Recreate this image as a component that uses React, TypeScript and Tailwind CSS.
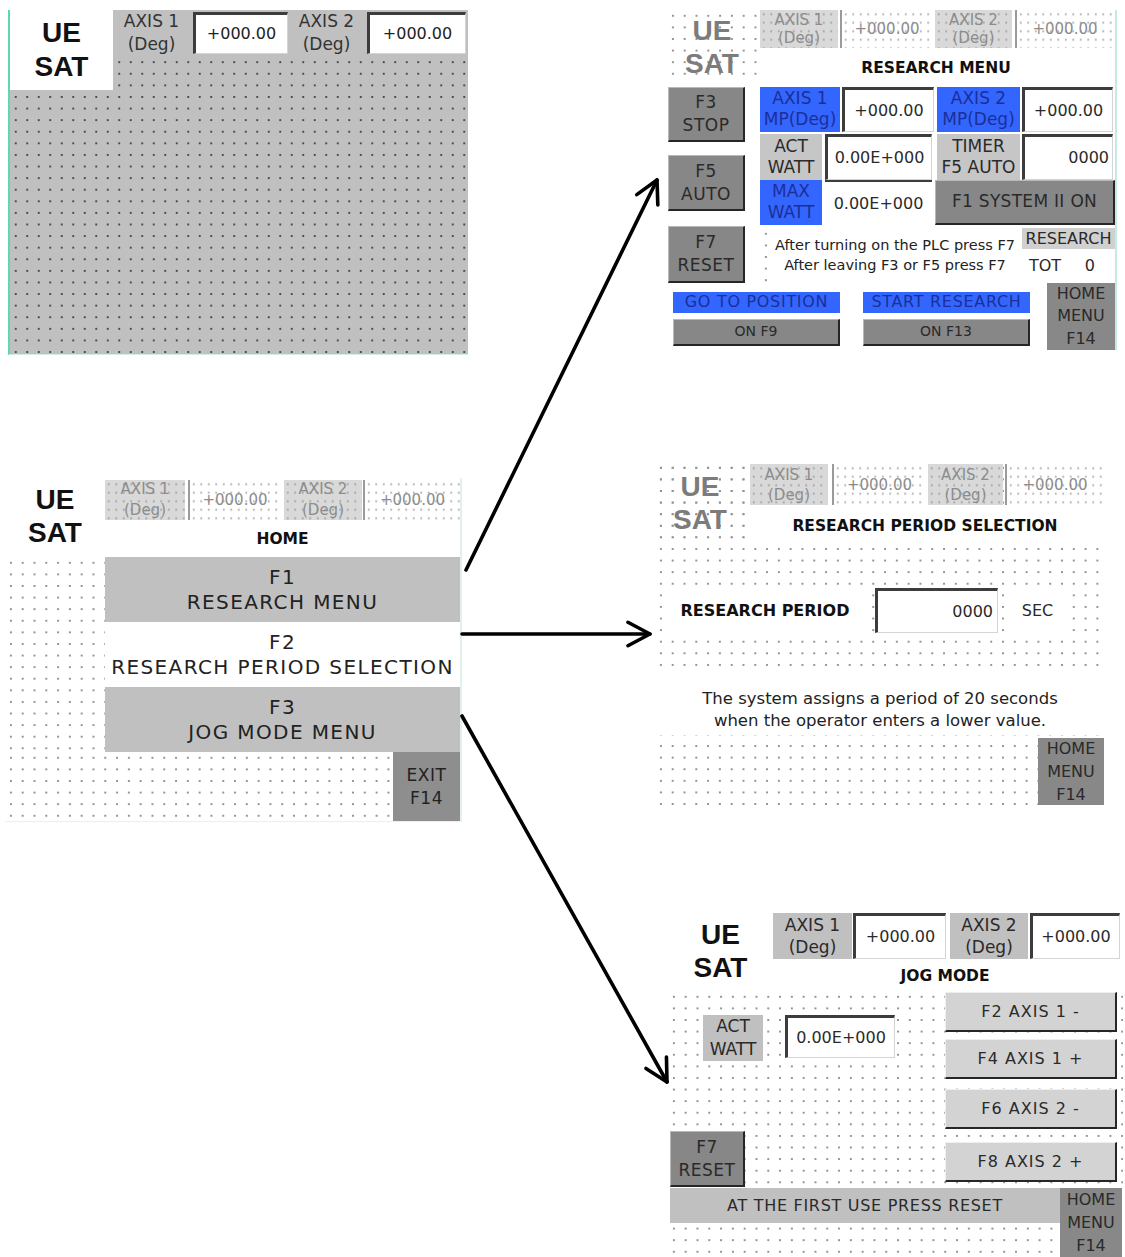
import React from "react";

const DOT_GRAY =
  "bg-[#c0c0c0] bg-[radial-gradient(circle,#4a4a4a_1px,transparent_1.5px)] [background-size:11.5px_11.6px]";
const DOT_WHITE =
  "bg-white bg-[radial-gradient(circle,#939393_0.9px,transparent_1.4px)] [background-size:11.8px_11.6px]";
const DOT_FADE =
  "bg-[#d9d9d9] bg-[radial-gradient(circle,#a4a4a4_0.8px,transparent_1.3px)] [background-size:7.5px_8.5px]";
const DOT_FADE_W =
  "bg-white bg-[radial-gradient(circle,#b0b0b0_0.8px,transparent_1.3px)] [background-size:7.5px_8.5px]";
const INPUT =
  "bg-white border-t-[3px] border-l-[3px] border-t-[#3c3c3c] border-l-[#3c3c3c] border-r border-b border-r-[#d4d4d4] border-b-[#d4d4d4]";
const DARK_BTN =
  "bg-[#878787] border-t border-l border-t-[#b8b8b8] border-l-[#b8b8b8] border-r-2 border-b-2 border-r-[#262626] border-b-[#262626]";
const LIGHT_BTN =
  "bg-[#d3d3d3] border-t border-l border-t-[#efefef] border-l-[#efefef] border-r-2 border-b-2 border-r-[#262626] border-b-[#262626]";
const BLUE = "bg-[#3366ff] text-[#1c2f96]";
const ARIAL = "font-['Liberation_Sans',Arial,sans-serif]";

function Two({ a, b, cls = "" }: { a: string; b: string; cls?: string }) {
  return (
    <div className={`flex flex-col items-center justify-center ${cls}`}>
      <span>{a}</span>
      <span>{b}</span>
    </div>
  );
}

function FadedUE({ w }: { w: string }) {
  return (
    <div className={`${w} ${DOT_WHITE} flex flex-col items-center justify-start ${ARIAL} font-bold text-[28px] leading-[33px] text-[#7c7c7c]`}>
      <span>UE</span>
      <span>SAT</span>
    </div>
  );
}

function Panel1() {
  return (
    <div className={`ml-[8px] mt-[10px] w-[460px] h-[345px] border-l-2 border-l-[#5fd6b4] border-b border-b-[#cdeee3] flex items-start ${DOT_GRAY}`}>
      <div className={`w-[103px] h-[80px] bg-white flex flex-col items-center justify-center ${ARIAL} font-bold text-[28px] leading-[34px] text-[#111]`}>
        <span>UE</span>
        <span>SAT</span>
      </div>
      <div className="flex-1 h-[45px] bg-[#c0c0c0] flex items-start text-[#333]">
        <Two a="AXIS 1" b="(Deg)" cls="w-[77px] h-[45px] text-[17px] leading-[23px]" />
        <div className={`ml-[3px] mt-[2px] w-[95px] h-[42px] flex items-center justify-center text-[16px] text-[#222] ${INPUT}`}>+000.00</div>
        <Two a="AXIS 2" b="(Deg)" cls="w-[77px] h-[45px] text-[17px] leading-[23px]" />
        <div className={`ml-[2px] mt-[2px] w-[99px] h-[42px] flex items-center justify-center text-[16px] text-[#222] ${INPUT}`}>+000.00</div>
      </div>
    </div>
  );
}

function Panel2() {
  return (
    <div className="ml-[5px] mt-[123px] w-[457px] h-[344px] bg-white border-r-2 border-r-[#dff3ec] border-b border-b-[#e3f3ee] flex flex-col text-[#222]">
      <div className="flex h-[79px]">
        <div className={`w-[100px] flex flex-col items-center justify-center pb-[4px] ${ARIAL} font-bold text-[28px] leading-[33px] text-[#111]`}>
          <span>UE</span>
          <span>SAT</span>
        </div>
        <div className="flex-1 flex flex-col">
          <div className="flex mt-[2px] h-[40px] text-[15px] leading-[21px] text-[#8c8c8c]">
            <Two a="AXIS 1" b="(Deg)" cls={`w-[80px] ${DOT_FADE}`} />
            <div className={`ml-[3px] w-[92px] flex items-center justify-center border-l-2 border-l-[#9a9a9a] ${DOT_FADE_W}`}>+000.00</div>
            <Two a="AXIS 2" b="(Deg)" cls={`ml-[4px] w-[78px] ${DOT_FADE}`} />
            <div className={`ml-[1px] w-[97px] flex items-center justify-center border-l-2 border-l-[#9a9a9a] ${DOT_FADE_W}`}>+000.00</div>
          </div>
          <div className="flex-1 flex items-center justify-center pt-[2px] font-bold text-[15.5px] text-[#111]">HOME</div>
        </div>
      </div>
      <div className="flex h-[195px]">
        <div className={`w-[100px] ${DOT_WHITE}`} />
        <div className="flex-1 flex flex-col text-[20px] leading-[25px] tracking-[1.4px]">
          <Two a="F1" b="RESEARCH MENU" cls="h-[65px] bg-[#c0c0c0]" />
          <Two a="F2" b="RESEARCH PERIOD SELECTION" cls="h-[65px] bg-white" />
          <Two a="F3" b="JOG MODE MENU" cls="h-[65px] bg-[#c0c0c0]" />
        </div>
      </div>
      <div className="flex flex-1">
        <div className={`flex-1 ${DOT_WHITE}`} />
        <Two a="EXIT" b="F14" cls="w-[67px] bg-[#8e8e8e] text-[17px] leading-[23px] tracking-[0.5px]" />
      </div>
    </div>
  );
}

function Panel3() {
  return (
    <div className="ml-[197px] mt-[10px] w-[450px] h-[340px] bg-white border-r-2 border-r-[#c4ebdf] flex flex-col text-[#2a2a2a]">
      <div className="flex h-[77px]">
        <FadedUE w="w-[90px] h-[72px] pt-[4px]" />
        <div className="flex-1 flex flex-col">
          <div className="flex h-[38px] text-[15px] leading-[18px] text-[#8c8c8c]">
            <Two a="AXIS 1" b="(Deg)" cls={`ml-[3px] w-[78px] ${DOT_FADE}`} />
            <div className={`ml-[2px] w-[92px] flex items-center justify-center border-l-2 border-l-[#9a9a9a] ${DOT_FADE_W}`}>+000.00</div>
            <Two a="AXIS 2" b="(Deg)" cls={`ml-[3px] w-[77px] ${DOT_FADE}`} />
            <div className={`ml-[3px] w-[98px] flex items-center justify-center border-l-2 border-l-[#9a9a9a] ${DOT_FADE_W}`}>+000.00</div>
          </div>
          <div className="flex-1 flex items-center justify-center pt-[2px] font-bold text-[15.5px] text-[#111]">RESEARCH MENU</div>
        </div>
      </div>
      <div className="flex h-[196px]">
        <div className="w-[93px] flex flex-col pl-[1px] text-[17px] leading-[23px] tracking-[0.5px]">
          <Two a="F3" b="STOP" cls={`w-[77px] h-[56px] ${DARK_BTN}`} />
          <Two a="F5" b="AUTO" cls={`mt-[13px] w-[77px] h-[56px] ${DARK_BTN}`} />
          <Two a="F7" b="RESET" cls={`mt-[15px] w-[77px] h-[57px] ${DARK_BTN}`} />
        </div>
        <div className="flex-1 flex flex-col text-[17px] leading-[21px]">
          <div className="flex h-[45px]">
            <Two a="AXIS 1" b="MP(Deg)" cls={`w-[80px] ${BLUE}`} />
            <div className={`ml-[2px] w-[92px] flex items-center justify-center text-[16px] ${INPUT}`}>+000.00</div>
            <Two a="AXIS 2" b="MP(Deg)" cls={`ml-[3px] w-[83px] ${BLUE}`} />
            <div className={`ml-[2px] w-[91px] flex items-center justify-center text-[16px] ${INPUT}`}>+000.00</div>
          </div>
          <div className="flex h-[46px] mt-[2px]">
            <Two a="ACT" b="WATT" cls="w-[62px] bg-[#c6c6c6]" />
            <div className={`ml-[3px] w-[107px] flex items-center justify-center text-[16px] ${INPUT}`}>0.00E+000</div>
            <Two a="TIMER" b="F5 AUTO" cls="ml-[5px] w-[83px] bg-[#c6c6c6]" />
            <div className={`ml-[2px] w-[91px] flex items-center justify-end pr-[3px] text-[16px] ${INPUT}`}>0000</div>
          </div>
          <div className="flex h-[45px]">
            <Two a="MAX" b="WATT" cls={`w-[62px] ${BLUE}`} />
            <div className="ml-[3px] w-[107px] flex items-center justify-center text-[16px] bg-white border-t-2 border-t-[#3c3c3c]">0.00E+000</div>
            <div className={`ml-[3px] w-[180px] flex items-center justify-center text-[17px] tracking-[0.3px] ${DARK_BTN}`}>F1 SYSTEM II ON</div>
          </div>
          <div className="flex h-[55px] mt-[3px]">
            <div className="w-[262px] flex">
              <div className={`w-[8px] ${DOT_WHITE}`} />
              <div className="flex-1 flex flex-col items-center justify-center text-[14.5px] leading-[20px] text-[#222]">
                <span>After turning on the PLC press F7</span>
                <span>After leaving F3 or F5 press F7</span>
              </div>
            </div>
            <div className="flex-1 flex flex-col text-[16px]">
              <div className="h-[21px] bg-[#d0d0d0] flex items-center justify-center">RESEARCH</div>
              <div className="flex-1 flex items-center justify-between pl-[7px] pr-[20px]">
                <span>TOT</span>
                <span>0</span>
              </div>
            </div>
          </div>
        </div>
      </div>
      <div className="flex flex-1 text-[16px]">
        <div className="ml-[6px] w-[167px] flex flex-col">
          <div className={`mt-[9px] h-[21px] flex items-center justify-center tracking-[0.7px] ${BLUE}`}>GO TO POSITION</div>
          <div className={`mt-[6px] h-[27px] flex items-center justify-center text-[14px] ${DARK_BTN}`}>ON F9</div>
        </div>
        <div className="ml-[23px] w-[167px] flex flex-col">
          <div className={`mt-[9px] h-[21px] flex items-center justify-center tracking-[0.7px] ${BLUE}`}>START RESEARCH</div>
          <div className={`mt-[6px] h-[27px] flex items-center justify-center text-[14px] ${DARK_BTN}`}>ON F13</div>
        </div>
        <div className="ml-[17px] w-[68px] bg-[#888888] flex flex-col items-center justify-center leading-[22.5px]">
          <span>HOME</span>
          <span>MENU</span>
          <span>F14</span>
        </div>
      </div>
    </div>
  );
}

function Panel4() {
  return (
    <div className={`ml-[185px] mt-[112px] w-[450px] h-[343px] flex flex-col text-[#2a2a2a] ${DOT_WHITE}`}>
      <div className="flex h-[83px]">
        <FadedUE w="w-[90px] h-[76px] pt-[8px] !bg-transparent" />
        <div className="flex-1 flex flex-col">
          <div className="flex mt-[2px] h-[41px] text-[15px] leading-[20px] text-[#8c8c8c]">
            <Two a="AXIS 1" b="(Deg)" cls={`ml-[5px] w-[78px] ${DOT_FADE}`} />
            <div className={`ml-[4px] w-[93px] flex items-center justify-center border-l-2 border-l-[#9a9a9a] ${DOT_FADE_W}`}>+000.00</div>
            <Two a="AXIS 2" b="(Deg)" cls={`ml-[3px] w-[75px] ${DOT_FADE}`} />
            <div className={`ml-[2px] w-[98px] flex items-center justify-center border-l-2 border-l-[#9a9a9a] ${DOT_FADE_W}`}>+000.00</div>
          </div>
          <div className="flex-1 mt-[3px] mb-[3px] pt-[4px] bg-white flex items-center justify-center font-bold text-[15.5px] text-[#111]">
            RESEARCH PERIOD SELECTION
          </div>
        </div>
      </div>
      <div className="h-[43px]" />
      <div className="flex h-[45px] text-[16px]">
        <div className="ml-[10px] w-[200px] bg-white flex items-center justify-center font-bold text-[#111]">RESEARCH PERIOD</div>
        <div className={`ml-[10px] w-[123px] flex items-center justify-end pr-[4px] ${INPUT}`}>0000</div>
        <div className="ml-[7px] w-[65px] bg-white flex items-center justify-center">SEC</div>
      </div>
      <div className="h-[39px]" />
      <div className="h-[63px] bg-white flex flex-col items-center justify-center pt-[13px] text-[16.5px] leading-[22px] text-[#222]">
        <span>The system assigns a period of 20 seconds</span>
        <span>when the operator enters a lower value.</span>
      </div>
      <div className="flex-1 flex justify-end items-end">
        <div className="mr-[1px] w-[66px] h-[67px] bg-[#888888] flex flex-col items-center justify-center text-[16px] leading-[23px]">
          <span>HOME</span>
          <span>MENU</span>
          <span>F14</span>
        </div>
      </div>
    </div>
  );
}

function Panel5() {
  return (
    <div className="ml-[198px] mt-[107px] w-[455px] h-[345px] bg-white flex flex-col text-[#2a2a2a]">
      <div className="flex h-[80px]">
        <div className={`w-[105px] flex flex-col items-center justify-start pt-[6px] ${ARIAL} font-bold text-[28px] leading-[33px] text-[#111]`}>
          <span>UE</span>
          <span>SAT</span>
        </div>
        <div className="flex-1 flex flex-col">
          <div className="flex mt-[1px] h-[46px] text-[17px] leading-[22px]">
            <Two a="AXIS 1" b="(Deg)" cls="w-[79px] bg-[#c0c0c0]" />
            <div className={`ml-[1px] w-[93px] flex items-center justify-center text-[16px] ${INPUT}`}>+000.00</div>
            <Two a="AXIS 2" b="(Deg)" cls="ml-[4px] w-[78px] bg-[#c0c0c0]" />
            <div className={`ml-[2px] w-[90px] flex items-center justify-center text-[16px] ${INPUT}`}>+000.00</div>
          </div>
          <div className="flex-1 flex items-center justify-center pt-[3px] font-bold text-[15.5px] text-[#111] pr-[6px]">JOG MODE</div>
        </div>
      </div>
      <div className={`flex h-[198px] ${DOT_WHITE}`}>
        <div className="w-[272px] flex flex-col">
          <div className="flex mt-[24px]">
            <Two a="ACT" b="WATT" cls="ml-[35px] w-[60px] h-[46px] bg-[#c0c0c0] text-[17px] leading-[23px]" />
            <div className={`ml-[22px] w-[110px] h-[43px] flex items-center justify-center text-[16px] ${INPUT}`}>0.00E+000</div>
          </div>
          <Two a="F7" b="RESET" cls={`mt-[70px] ml-[2px] w-[75px] h-[56px] text-[17px] leading-[23px] tracking-[0.5px] ${DARK_BTN}`} />
        </div>
        <div className="ml-[5px] w-[172px] flex flex-col text-[16px] tracking-[1px]">
          <div className={`mt-[1px] h-[40px] flex items-center justify-center ${LIGHT_BTN}`}>F2 AXIS 1 -</div>
          <div className={`mt-[7px] h-[40px] flex items-center justify-center ${LIGHT_BTN}`}>F4 AXIS 1 +</div>
          <div className={`mt-[10px] h-[40px] flex items-center justify-center ${LIGHT_BTN}`}>F6 AXIS 2 -</div>
          <div className={`mt-[13px] h-[40px] flex items-center justify-center ${LIGHT_BTN}`}>F8 AXIS 2 +</div>
        </div>
      </div>
      <div className="flex flex-1 text-[16px]">
        <div className={`w-[392px] flex flex-col ${DOT_WHITE}`}>
          <div className="ml-[2px] h-[35px] bg-[#c0c0c0] flex items-center justify-center tracking-[0.7px]">
            AT THE FIRST USE PRESS RESET
          </div>
        </div>
        <div className="w-[62px] bg-[#888888] flex flex-col items-center justify-center leading-[23px]">
          <span>HOME</span>
          <span>MENU</span>
          <span>F14</span>
        </div>
      </div>
    </div>
  );
}

function Arrow({ x1, y1, x2, y2 }: { x1: number; y1: number; x2: number; y2: number }) {
  const dx = x2 - x1;
  const dy = y2 - y1;
  const L = Math.hypot(dx, dy);
  const bx = -dx / L;
  const by = -dy / L;
  const a = (28 * Math.PI) / 180;
  const len = 25;
  const c = Math.cos(a);
  const s = Math.sin(a);
  const p1x = x2 + len * (bx * c - by * s);
  const p1y = y2 + len * (bx * s + by * c);
  const p2x = x2 + len * (bx * c + by * s);
  const p2y = y2 + len * (-bx * s + by * c);
  return (
    <g stroke="#000" strokeWidth={3.6} fill="none" strokeLinecap="round" strokeLinejoin="round">
      <line x1={x1} y1={y1} x2={x2} y2={y2} />
      <polyline points={`${p1x},${p1y} ${x2},${y2} ${p2x},${p2y}`} />
    </g>
  );
}

export default function App() {
  return (
    <div className="relative w-[1125px] h-[1257px] overflow-hidden bg-white flex font-['DejaVu_Sans',sans-serif]">
      <div className="w-[470px] shrink-0 flex flex-col">
        <Panel1 />
        <Panel2 />
      </div>
      <div className="flex-1 flex flex-col">
        <Panel3 />
        <Panel4 />
        <Panel5 />
      </div>
      <svg className="absolute inset-0 pointer-events-none" width="1125" height="1257" viewBox="0 0 1125 1257">
        <Arrow x1={466} y1={570} x2={657} y2={180} />
        <Arrow x1={462} y1={634} x2={650} y2={634} />
        <Arrow x1={462} y1={716} x2={667} y2={1082} />
      </svg>
    </div>
  );
}
